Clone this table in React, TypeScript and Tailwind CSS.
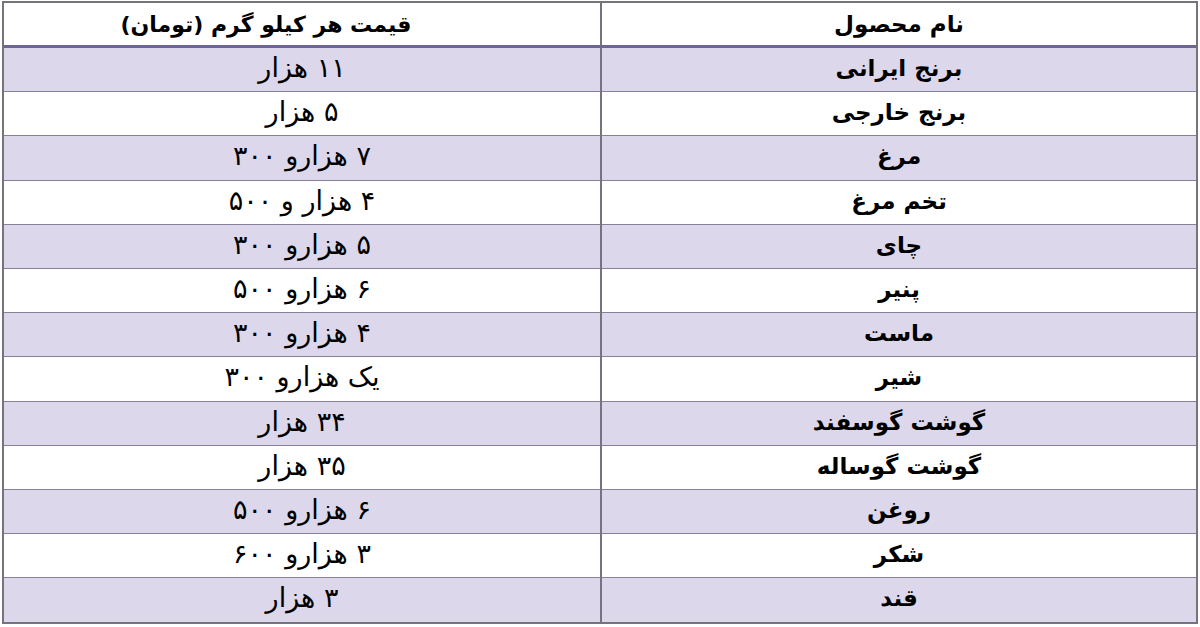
const rows: [string, string][] = [
  ['برنج ایرانی', '۱۱ هزار'],
  ['برنج خارجی', '۵ هزار'],
  ['مرغ', '۷ هزارو ۳۰۰'],
  ['تخم مرغ', '۴ هزار و ۵۰۰'],
  ['چای', '۵ هزارو ۳۰۰'],
  ['پنیر', '۶ هزارو ۵۰۰'],
  ['ماست', '۴ هزارو ۳۰۰'],
  ['شیر', 'یک هزارو ۳۰۰'],
  ['گوشت گوسفند', '۳۴ هزار'],
  ['گوشت گوساله', '۳۵ هزار'],
  ['روغن', '۶ هزارو ۵۰۰'],
  ['شکر', '۳ هزارو ۶۰۰'],
  ['قند', '۳ هزار'],
];

export default function App() {
  return (
    <div className="h-[627px] w-[1200px] bg-white pl-[2px] pt-px" style={{ fontFamily: '"DejaVu Sans", sans-serif' }}>
      <div dir="rtl" className="w-[1196px] border-2 border-[#76737f] bg-white text-black">
        <div className="grid h-[45px] grid-cols-2 border-b-[3px] border-[#6d6594]">
          <div className="flex items-center justify-center border-l-2 border-[#76737f] text-[23px] font-bold">نام محصول</div>
          <div className="flex items-center justify-center pr-[72px] text-[22px] font-bold">قیمت هر کیلو گرم (تومان)</div>
        </div>
        {rows.map(([name, price], i) => (
          <div
            key={name}
            className={`grid h-[44.2px] grid-cols-2 border-[#86819a] ${i < rows.length - 1 ? 'border-b' : ''} ${i % 2 === 0 ? 'bg-[#dcd7ea]' : 'bg-white'}`}
          >
            <div className="flex items-center justify-center border-l-2 border-[#76737f] pb-1 text-[23px] font-bold">{name}</div>
            <div className="flex items-center justify-center pb-1 text-[27px]">{price}</div>
          </div>
        ))}
      </div>
    </div>
  );
}
